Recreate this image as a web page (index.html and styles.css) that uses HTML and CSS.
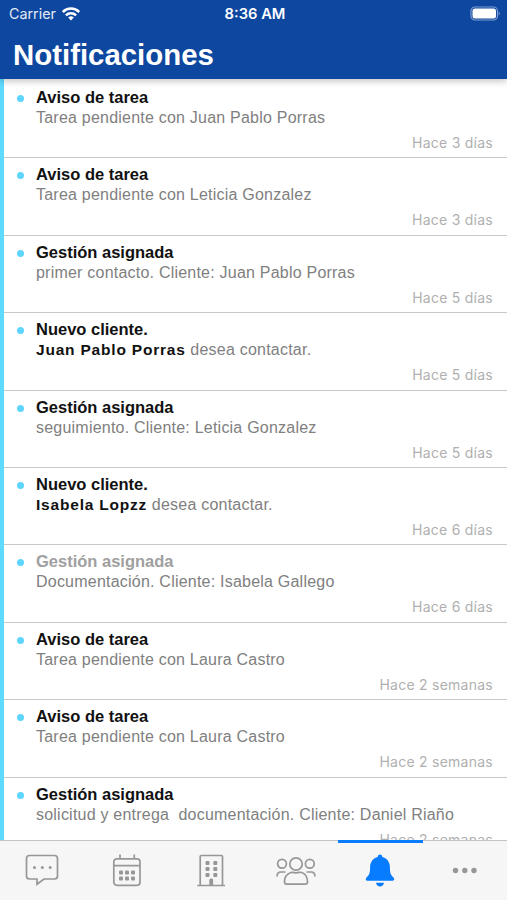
FILE: index.html
```html
<!DOCTYPE html>
<html lang="es">
<head>
    <meta charset="UTF-8">
    <meta name="viewport" content="width=device-width, initial-scale=1.0">
    <title>Notificaciones</title>
    <link rel="stylesheet" href="styles.css">
</head>
<body>
    <header class="header">
        <div class="status-bar">
            <div class="carrier">
                <span>Carrier</span>
                <svg width="18" height="14" viewBox="0 0 18 14" fill="none" stroke="#fff" stroke-width="2.5">
                    <path d="M.8 5a11.500 11.500 0 0 1 16.400 0"/>
                    <path d="M3.900 8.400a7.200 7.200 0 0 1 10.200 0"/>
                    <path d="M9 13.400L6.200 10.600a4 4 0 0 1 5.600 0z" fill="#fff" stroke="none"/>
                </svg>
            </div>
            <div class="clock">8:36 AM</div>
            <svg class="battery" width="31" height="15" viewBox="0 0 31 15">
                <rect x="1" y="1" width="26.5" height="13" rx="4" fill="none" stroke="#7f9dd0" stroke-width="1.2"/>
                <rect x="2.5" y="2.5" width="23.5" height="10" rx="2.5" fill="#fff"/>
                <path d="M28.7 5.5q2 2 0 4z" fill="#8ba7d5"/>
            </svg>
        </div>
        <h1>Notificaciones</h1>
    </header>

    <main class="list">
        <article class="item">
            <h2>Aviso de tarea</h2>
            <p>Tarea pendiente con Juan Pablo Porras</p>
            <time>Hace 3 días</time>
        </article>
        <article class="item">
            <h2>Aviso de tarea</h2>
            <p>Tarea pendiente con Leticia Gonzalez</p>
            <time>Hace 3 días</time>
        </article>
        <article class="item">
            <h2>Gestión asignada</h2>
            <p>primer contacto. Cliente: Juan Pablo Porras</p>
            <time>Hace 5 días</time>
        </article>
        <article class="item">
            <h2>Nuevo cliente.</h2>
            <p><b>Juan Pablo Porras</b> desea contactar.</p>
            <time>Hace 5 días</time>
        </article>
        <article class="item">
            <h2>Gestión asignada</h2>
            <p>seguimiento. Cliente: Leticia Gonzalez</p>
            <time>Hace 5 días</time>
        </article>
        <article class="item">
            <h2>Nuevo cliente.</h2>
            <p><b>Isabela Lopzz</b> desea contactar.</p>
            <time>Hace 6 días</time>
        </article>
        <article class="item read">
            <h2>Gestión asignada</h2>
            <p>Documentación. Cliente: Isabela Gallego</p>
            <time>Hace 6 días</time>
        </article>
        <article class="item">
            <h2>Aviso de tarea</h2>
            <p>Tarea pendiente con Laura Castro</p>
            <time>Hace 2 semanas</time>
        </article>
        <article class="item">
            <h2>Aviso de tarea</h2>
            <p>Tarea pendiente con Laura Castro</p>
            <time>Hace 2 semanas</time>
        </article>
        <article class="item">
            <h2>Gestión asignada</h2>
            <p>solicitud y entrega  documentación. Cliente: Daniel Riaño</p>
            <time>Hace 2 semanas</time>
        </article>
    </main>

    <nav class="tabs">
        <!-- messages -->
        <a class="tab">
            <svg width="42" height="40" viewBox="0 0 42 40">
                <path d="M8.5 5.500h25a3 3 0 0 1 3 3v17.500a3 3 0 0 1-3 3h-10.500l-7 5.200v-5.200h-7.500a3 3 0 0 1-3-3v-17.500a3 3 0 0 1 3-3z"/>
                <g class="solid"><circle cx="13.500" cy="17.500" r="1.500"/><circle cx="21.300" cy="17.500" r="1.500"/><circle cx="29.200" cy="17.500" r="1.500"/></g>
            </svg>
        </a>
        <!-- calendar -->
        <a class="tab">
            <svg width="42" height="40" viewBox="0 0 42 40">
                <rect x="7.800" y="8.800" width="26.200" height="26.500" rx="3"/>
                <path d="M8 15.700h26M14 4.500v4M28.300 4.500v4"/>
                <g class="solid">
                    <rect x="13" y="20.500" width="4" height="4" rx="1"/><rect x="19" y="20.500" width="4" height="4" rx="1"/><rect x="25" y="20.500" width="4" height="4" rx="1"/>
                    <rect x="13" y="26.500" width="4" height="4" rx="1"/><rect x="19" y="26.500" width="4" height="4" rx="1"/><rect x="25" y="26.500" width="4" height="4" rx="1"/>
                </g>
            </svg>
        </a>
        <!-- company -->
        <a class="tab">
            <svg width="42" height="40" viewBox="0 0 42 40">
                <path d="M10.200 35v-28.500q0-1 1-1h20.300q1 0 1 1v28.500M7.300 35.500h27.700"/>
                <g class="solid">
                    <rect x="15.500" y="11" width="4" height="4" rx="1"/><rect x="23.300" y="11" width="4" height="4" rx="1"/>
                    <rect x="15.500" y="17" width="4" height="4" rx="1"/><rect x="23.300" y="17" width="4" height="4" rx="1"/>
                    <rect x="15.500" y="23" width="4" height="4" rx="1"/><rect x="23.300" y="23" width="4" height="4" rx="1"/>
                    <path d="M19.300 35.500v-5.500q0-1.500 1.500-1.500h.8q1.500 0 1.500 1.500v5.500z"/>
                </g>
            </svg>
        </a>
        <!-- clients -->
        <a class="tab">
            <svg width="42" height="40" viewBox="0 0 42 40">
                <circle cx="21" cy="14" r="6.200"/>
                <circle cx="7" cy="13.700" r="4.400"/>
                <circle cx="34.800" cy="13.700" r="4.400"/>
                <path d="M15.500 22.700q1-.6 2.300-.3q3.200.9 6.400 0q1.300-.3 2.600.1q5.700 2 5.700 9.500q0 2.200-2.200 2.200h-18.600q-2.200 0-2.200-2.200q0-7.300 6-9.300z"/>
                <path d="M2 26.500q0-4.500 4-4.500h4.500M40 26.500q0-4.500-4-4.500h-4.500"/>
            </svg>
        </a>
        <!-- notifications -->
        <a class="tab active">
            <svg width="42" height="40" viewBox="0 0 42 40">
                <path d="M21 4.500c1.400 0 2.300 1 2.300 2.600c4.500 1.200 7.600 4.900 7.600 9.900c0 6.200.8 7.800 3.300 10.200c1.900 1.800.9 3.500-.9 3.500H8.700c-1.800 0-2.800-1.700-.9-3.500c2.500-2.400 3.300-4 3.300-10.200c0-5 3.100-8.700 7.600-9.900c0-1.600.9-2.600 2.300-2.600z"/>
                <path d="M17 32.700h8q-.8 3.800-4 3.800t-4-3.800z"/>
            </svg>
        </a>
        <!-- more -->
        <a class="tab">
            <svg width="42" height="40" viewBox="0 0 42 40">
                <g class="solid"><circle cx="11.500" cy="20.500" r="2.700"/><circle cx="20.800" cy="20.500" r="2.700"/><circle cx="30" cy="20.500" r="2.700"/></g>
            </svg>
        </a>
    </nav>
</body>
</html>
```
FILE: styles.css
```css
* {
    box-sizing: border-box;
}
body {
    margin: 0;
    height: 900px;
    display: flex;
    flex-direction: column;
    overflow: hidden;
    background-color: #fff;
    font-family: "Liberation Sans", Arial, sans-serif;
}
.header {
    position: relative;
    z-index: 1;
    flex: none;
    height: 79px;
    background-color: #0e479f;
    color: #fff;
    box-shadow: 0 3px 6px rgba(0, 0, 0, 0.2);
}
.status-bar {
    display: grid;
    grid-template-columns: 1fr auto 1fr;
    align-items: center;
    height: 27px;
    padding: 0 6px 0 9px;
    font-family: Inter, sans-serif;
    font-size: 14.3px;
}
.carrier {
    display: flex;
    align-items: center;
    gap: 6px;
    color: #e3ebf8;
}
.clock {
    font-weight: 600;
    font-size: 14.7px;
}
.battery {
    justify-self: end;
}
h1 {
    margin: 10px 0 0 13px;
    font-size: 29.4px;
    line-height: 35px;
}
.list {
    flex: 1;
    min-height: 0;
    overflow: hidden;
    padding-top: 2px;
    border-left: 4px solid #5edaff;
}
.item {
    position: relative;
    display: flex;
    flex-direction: column;
    height: 77.42px;
    padding: 6px 14px 0 32px;
    border-bottom: 1px solid #c8c8c8;
}
/* unread dot */
.item::before {
    content: "";
    position: absolute;
    left: 13px;
    top: 14px;
    width: 7px;
    height: 7px;
    border-radius: 50%;
    background-color: #5ed5ff;
}
.item h2 {
    margin: 0;
    font-size: 16.5px;
    line-height: 21px;
    color: #111;
}
.item.read h2 {
    color: #a0a0a0;
}
.item p {
    margin: 0;
    font-size: 16px;
    line-height: 20px;
    letter-spacing: 0.22px;
    white-space: pre;
    color: #808080;
}
.item b {
    font-size: 15.5px;
    letter-spacing: 0.8px;
    color: #111;
}
.item time {
    align-self: flex-end;
    margin-top: 5px;
    font-family: Inter, sans-serif;
    font-size: 14px;
    line-height: 20px;
    letter-spacing: 0.25px;
    color: #b0b0b0;
}
.tabs {
    flex: none;
    display: grid;
    grid-template-columns: repeat(6, 1fr);
    height: 60px;
    background-color: #f6f6f6;
    border-top: 1px solid #c4c4c4;
}
.tab {
    position: relative;
    display: flex;
    justify-content: center;
    padding-top: 9px;
}
.tab svg {
    fill: none;
    stroke: #979797;
    stroke-width: 1.7;
    overflow: visible;
}
.tab .solid {
    fill: #979797;
    stroke: none;
}
.tab.active::before {
    content: "";
    position: absolute;
    left: 0;
    right: 0;
    top: -1px;
    height: 3px;
    background-color: #087cff;
}
.tab.active svg {
    fill: #087cff;
    stroke: none;
}
```
